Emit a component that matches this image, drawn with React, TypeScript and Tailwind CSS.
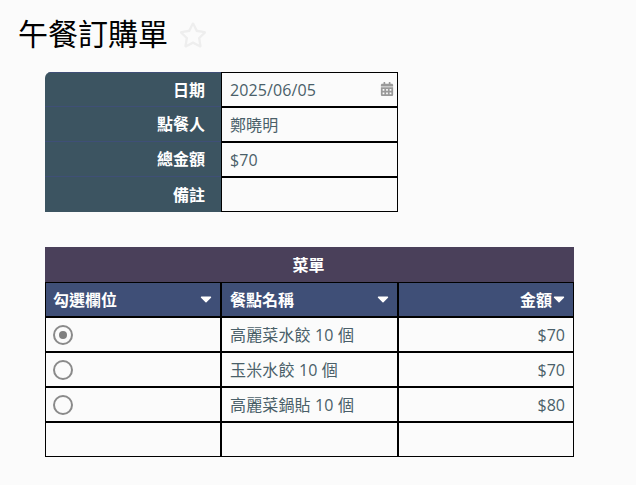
import { FaCalendarAlt, FaRegStar } from "react-icons/fa";

const Caret = () => (
  <svg width="12" height="7" viewBox="0 0 12 7" className="shrink-0">
    <path d="M1.5 1.2h9L6 5.8z" fill="#fff" stroke="#fff" strokeWidth="1.4" strokeLinejoin="round" />
  </svg>
);

const Radio = ({ checked }: { checked?: boolean }) => (
  <span className="flex h-5 w-5 items-center justify-center rounded-full border-2 border-[#8a8a8a]">
    {checked && <span className="h-2 w-2 rounded-full bg-[#808080]" />}
  </span>
);

const info = [
  { label: "日期", value: "2025/06/05", h: "h-[34px]" },
  { label: "點餐人", value: "鄭曉明", h: "h-[35px]" },
  { label: "總金額", value: "$70", h: "h-[35px]" },
  { label: "備註", value: "", h: "h-[36px]" },
];

const rows = [
  { name: "高麗菜水餃 10 個", price: "$70", checked: true },
  { name: "玉米水餃 10 個", price: "$70" },
  { name: "高麗菜鍋貼 10 個", price: "$80" },
];

export default function App() {
  return (
    <div className="h-[485px] w-[636px] overflow-hidden bg-[#fbfbfb] font-['Open_Sans','Noto_Sans_CJK_TC',sans-serif] text-base text-[#4a5f69]">
      <div className="flex h-[72px] items-start pl-[18px] pt-[13px]">
        <h1 className="text-[30px] leading-[42px] text-black">午餐訂購單</h1>
        <FaRegStar className="ml-[11px] mt-[8px] text-[#eeeeee]" size={28} />
      </div>

      <div className="ml-[45px] flex w-[353px]">
        <div className="w-[176px] overflow-hidden rounded-tl-[6px]">
          {info.map((r) => (
            <div
              key={r.label}
              className={`flex ${r.h} items-center justify-end border-t border-[#3f4f77] bg-[#3c5461] pr-[16px] font-semibold text-white`}
            >
              {r.label}
            </div>
          ))}
        </div>
        <div className="grid w-[177px] grid-cols-1 grid-rows-[repeat(4,33px)] gap-[2px] border border-black bg-black">
          {info.map((r, i) => (
            <div key={r.label} className="flex items-center justify-between bg-[#fbfbfb] pl-2 pr-[3px]">
              <span className="tracking-[0.1px]">{r.value}</span>
              {i === 0 && <FaCalendarAlt className="-translate-y-[1px] text-[#999999]" size={14} />}
            </div>
          ))}
        </div>
      </div>

      <div className="ml-[45px] mt-[35px] w-[529px]">
        <div className="flex h-[35px] items-center justify-center bg-[#4a405a] pr-[2px] font-semibold text-white">菜單</div>
        <div className="grid grid-cols-[174px_175px_174px] grid-rows-[repeat(5,33px)] gap-[2px] border border-black bg-black">
          <div className="flex items-center justify-between bg-[#3f4f77] pl-[7px] pr-2 font-semibold text-white">
            勾選欄位
            <Caret />
          </div>
          <div className="flex items-center justify-between bg-[#3f4f77] pl-2 pr-2 font-semibold text-white">
            餐點名稱
            <Caret />
          </div>
          <div className="flex items-center justify-end bg-[#3f4f77] pr-2 font-semibold text-white">
            <span className="mr-[1px]">金額</span>
            <Caret />
          </div>
          {rows.map((r) => (
            <div key={r.name} className="contents">
              <div className="flex items-center bg-[#fbfbfb] pl-[7px]">
                <Radio checked={r.checked} />
              </div>
              <div className="flex items-center bg-[#fbfbfb] pl-2 tracking-[0.15px]">{r.name}</div>
              <div className="flex items-center justify-end bg-[#fbfbfb] pr-2">{r.price}</div>
            </div>
          ))}
          <div className="bg-[#fbfbfb]" />
          <div className="bg-[#fbfbfb]" />
          <div className="bg-[#fbfbfb]" />
        </div>
      </div>
    </div>
  );
}
